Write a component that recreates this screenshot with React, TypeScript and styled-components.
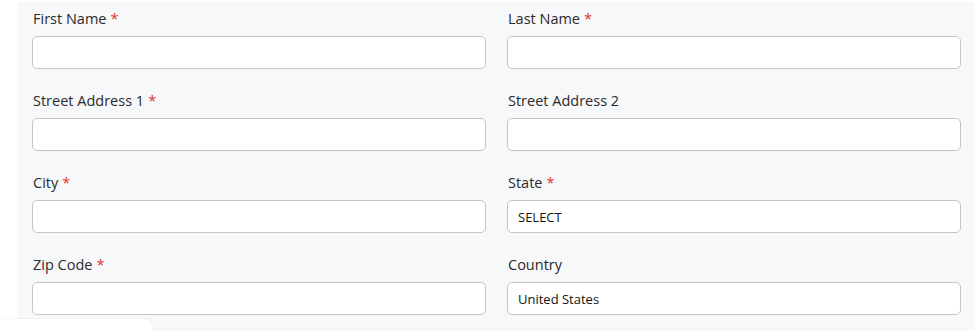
import React from "react";
import styled, { createGlobalStyle } from "styled-components";

const GlobalStyle = createGlobalStyle`
  html, body {
    margin: 0;
    padding: 0;
    background: #ffffff;
  }
  body {
    font-family: "Open Sans", "Noto Sans", Arial, sans-serif;
    color: #212529;
  }
`;

const Page = styled.div`
  position: relative;
  width: 979px;
  height: 331px;
  overflow: hidden;
  background: #ffffff;
`;

const Panel = styled.div`
  margin: 2px 0 0 17px;
  width: 958px;
  height: 340px;
  box-sizing: border-box;
  padding: 6px 14px 0 15px;
  background: #f7f8fa;
  display: grid;
  grid-template-columns: 1fr 1fr;
  column-gap: 21px;
  row-gap: 21px;
  align-content: start;
`;

const Field = styled.div`
  display: flex;
  flex-direction: column;
`;

const Label = styled.label`
  font-size: 14.5px;
  line-height: 22px;
  margin-bottom: 6px;
  padding-left: 1px;
  color: #2b2b2b;
`;

const Required = styled.span`
  color: #e4312b;
  margin-left: 4px;
`;

const Input = styled.input`
  height: 33px;
  box-sizing: border-box;
  border: 1px solid #c3c5c8;
  border-radius: 5px;
  background: #ffffff;
  padding: 0 10px;
  font-family: inherit;
  font-size: 13px;
  color: #111;
  outline: none;
`;

const BottomCard = styled.div`
  position: absolute;
  left: 0;
  top: 319px;
  width: 152px;
  height: 30px;
  background: #ffffff;
  border-top-right-radius: 8px;
  box-shadow: 0 -1px 2px rgba(0, 0, 0, 0.04);
`;

type FieldDef = { label: string; required?: boolean; value?: string };

const fields: FieldDef[] = [
  { label: "First Name", required: true },
  { label: "Last Name", required: true },
  { label: "Street Address 1", required: true },
  { label: "Street Address 2" },
  { label: "City", required: true },
  { label: "State", required: true, value: "SELECT" },
  { label: "Zip Code", required: true },
  { label: "Country", value: "United States" },
];

export default function App() {
  return (
    <>
      <GlobalStyle />
      <Page>
        <Panel>
          {fields.map((f) => (
            <Field key={f.label}>
              <Label>
                {f.label}
                {f.required && <Required>*</Required>}
              </Label>
              <Input defaultValue={f.value ?? ""} readOnly />
            </Field>
          ))}
        </Panel>
        <BottomCard />
      </Page>
    </>
  );
}
